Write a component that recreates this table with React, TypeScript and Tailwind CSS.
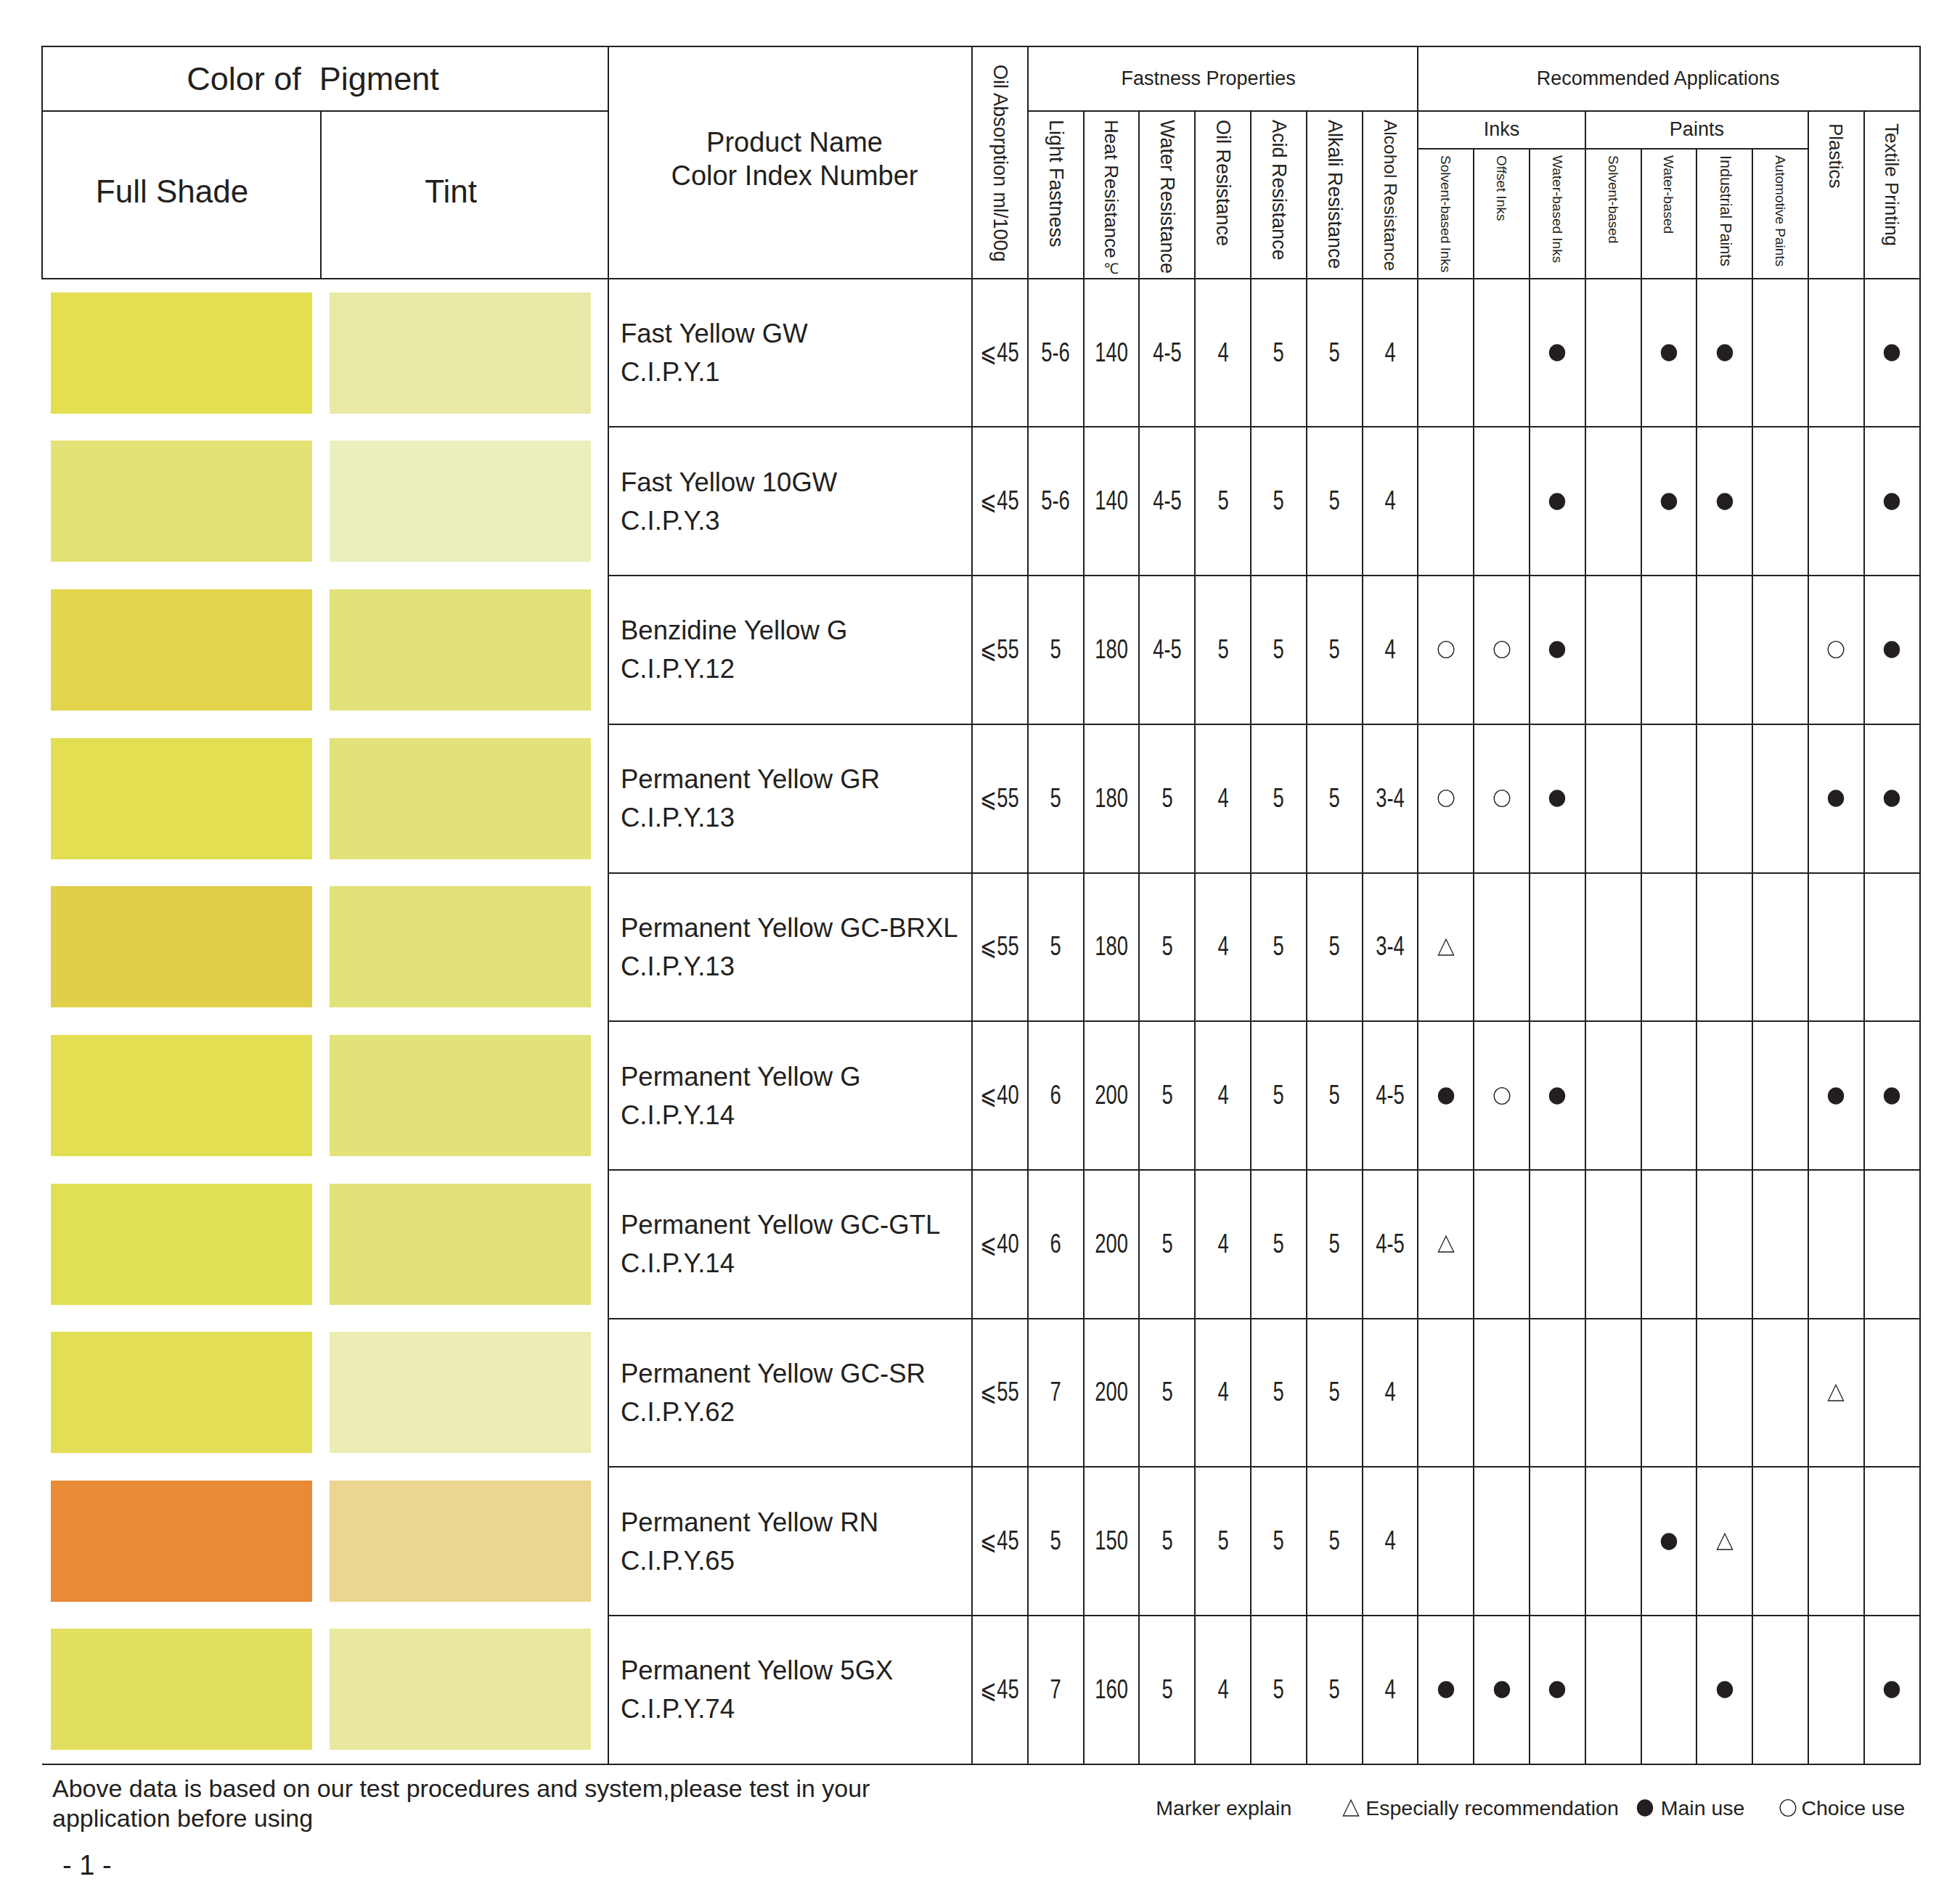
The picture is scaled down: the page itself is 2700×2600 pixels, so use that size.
import React from "react";

const INK = "#231f20";

type Mark = "●" | "○" | "△" | "-";

interface Pigment {
  name: string;
  ci: string;
  full: string;
  tint: string;
  oil: string;
  fast: string[];
  apps: string;
}

// apps: solvent inks, offset inks, water inks, solvent paints, water paints, industrial, automotive, plastics, textile
const pigments: Pigment[] = [
  { name: "Fast Yellow GW", ci: "C.I.P.Y.1", full: "bg-[#e3df50]", tint: "bg-[#e8e9a7]", oil: "⩽45", fast: ["5-6", "140", "4-5", "4", "5", "5", "4"], apps: "--●-●●--●" },
  { name: "Fast Yellow 10GW", ci: "C.I.P.Y.3", full: "bg-[#e2e276]", tint: "bg-[#ebefbc]", oil: "⩽45", fast: ["5-6", "140", "4-5", "5", "5", "5", "4"], apps: "--●-●●--●" },
  { name: "Benzidine Yellow G", ci: "C.I.P.Y.12", full: "bg-[#e4d54f]", tint: "bg-[#e2e27a]", oil: "⩽55", fast: ["5", "180", "4-5", "5", "5", "5", "4"], apps: "○○●----○●" },
  { name: "Permanent Yellow GR", ci: "C.I.P.Y.13", full: "bg-[#e3df52]", tint: "bg-[#e2e27b]", oil: "⩽55", fast: ["5", "180", "5", "4", "5", "5", "3-4"], apps: "○○●----●●" },
  { name: "Permanent Yellow GC-BRXL", ci: "C.I.P.Y.13", full: "bg-[#e1cf4b]", tint: "bg-[#e2e27b]", oil: "⩽55", fast: ["5", "180", "5", "4", "5", "5", "3-4"], apps: "△--------" },
  { name: "Permanent Yellow G", ci: "C.I.P.Y.14", full: "bg-[#e3df52]", tint: "bg-[#e2e27b]", oil: "⩽40", fast: ["6", "200", "5", "4", "5", "5", "4-5"], apps: "●○●----●●" },
  { name: "Permanent Yellow GC-GTL", ci: "C.I.P.Y.14", full: "bg-[#e1e055]", tint: "bg-[#e2e27b]", oil: "⩽40", fast: ["6", "200", "5", "4", "5", "5", "4-5"], apps: "△--------" },
  { name: "Permanent Yellow GC-SR", ci: "C.I.P.Y.62", full: "bg-[#e3df55]", tint: "bg-[#ebedb5]", oil: "⩽55", fast: ["7", "200", "5", "4", "5", "5", "4"], apps: "-------△-" },
  { name: "Permanent Yellow RN", ci: "C.I.P.Y.65", full: "bg-[#e88a36]", tint: "bg-[#ead591]", oil: "⩽45", fast: ["5", "150", "5", "5", "5", "5", "4"], apps: "----●△---" },
  { name: "Permanent Yellow 5GX", ci: "C.I.P.Y.74", full: "bg-[#e2df60]", tint: "bg-[#e9e8a0]", oil: "⩽45", fast: ["7", "160", "5", "4", "5", "5", "4"], apps: "●●●--●--●" },
];

// header label and the font class that matches its printed length
const fastnessHeads: [string, string][] = [
  ["Light Fastness", "[writing-mode:vertical-rl] whitespace-nowrap text-[27px] leading-none"],
  ["Heat Resistance", "[writing-mode:vertical-rl] whitespace-nowrap text-[26px] leading-none"],
  ["Water Resistance", "[writing-mode:vertical-rl] whitespace-nowrap text-[27px] leading-none"],
  ["Oil Resistance", "[writing-mode:vertical-rl] whitespace-nowrap text-[27px] leading-none"],
  ["Acid Resistance", "[writing-mode:vertical-rl] whitespace-nowrap text-[27px] leading-none"],
  ["Alkali Resistance", "[writing-mode:vertical-rl] whitespace-nowrap text-[27px] leading-none"],
  ["Alcohol Resistance", "[writing-mode:vertical-rl] whitespace-nowrap text-[24.5px] leading-none"],
];

const appHeads: [string, string][] = [
  ["Solvent-based Inks", "[writing-mode:vertical-rl] whitespace-nowrap text-[19px] leading-none"],
  ["Offset Inks", "[writing-mode:vertical-rl] whitespace-nowrap text-[19px] leading-none"],
  ["Water-based Inks", "[writing-mode:vertical-rl] whitespace-nowrap text-[19px] leading-none"],
  ["Solvent-based", "[writing-mode:vertical-rl] whitespace-nowrap text-[19px] leading-none"],
  ["Water-based", "[writing-mode:vertical-rl] whitespace-nowrap text-[19px] leading-none"],
  ["Industrial Paints", "[writing-mode:vertical-rl] whitespace-nowrap text-[21.5px] leading-none"],
  ["Automotive Paints", "[writing-mode:vertical-rl] whitespace-nowrap text-[19px] leading-none"],
];

function Marker({ kind }: { kind: Mark }) {
  if (kind === "●")
    return (
      <svg width="24" height="24" viewBox="0 0 24 24">
        <ellipse cx="12" cy="12" rx="11.2" ry="11.8" fill={INK} />
      </svg>
    );
  if (kind === "○")
    return (
      <svg width="24" height="24" viewBox="0 0 24 24">
        <ellipse cx="12" cy="12" rx="10.8" ry="11.3" fill="none" stroke={INK} strokeWidth="1.3" />
      </svg>
    );
  if (kind === "△")
    return (
      <svg width="24" height="24" viewBox="0 0 24 24">
        <path d="M12 1.2 L22.6 23 L1.4 23 Z" fill="none" stroke={INK} strokeWidth="1.3" />
      </svg>
    );
  return null;
}

function VText({ children, className }: { children: React.ReactNode; className: string }) {
  return (
    <div className="flex justify-center">
      <span className={className}>{children}</span>
    </div>
  );
}

export default function App() {
  const cell = "border-2 border-[#231f20]";
  return (
    <div className="w-[2700px] h-[2600px] bg-white text-[#231f20] font-['Liberation_Sans',Arial,sans-serif]">
      <div className="pl-[57px] pt-[63px] w-[2645px]">
        <table className="w-[2588px] table-fixed border-collapse">
          <colgroup>
            <col className="w-[384px]" />
            <col className="w-[396px]" />
            <col className="w-[501px]" />
            {Array.from({ length: 17 }).map((_, i) => (
              <col key={i} className="w-[76.8px]" />
            ))}
          </colgroup>
          <thead>
            <tr className="h-[89px]">
              <th colSpan={2} className={`${cell} p-0 pr-[34px] font-normal text-[45px] leading-none text-center`}>
                {"Color of\u00a0 Pigment"}
              </th>
              <th rowSpan={3} className={`${cell} p-0 pl-[12px] pb-[10px] font-normal text-[38px] leading-[46px] text-center`}>
                Product Name
                <br />
                Color Index Number
              </th>
              <th rowSpan={3} className={`${cell} p-0 pt-[24px] font-normal align-top`}>
                <VText className="[writing-mode:vertical-rl] whitespace-nowrap text-[27px] leading-none">Oil Absorption ml/100g</VText>
              </th>
              <th colSpan={7} className={`${cell} p-0 pr-[40px] font-normal text-[27px] leading-none text-center`}>
                Fastness Properties
              </th>
              <th colSpan={9} className={`${cell} p-0 pr-[30px] font-normal text-[27px] leading-none text-center`}>
                Recommended Applications
              </th>
            </tr>
            <tr className="h-[51px]">
              <th rowSpan={2} className={`${cell} p-0 pr-[26px] pb-[9px] font-normal text-[44px] leading-none text-center`}>
                Full Shade
              </th>
              <th rowSpan={2} className={`${cell} p-0 pr-[38px] pb-[9px] font-normal text-[44px] leading-none text-center`}>
                Tint
              </th>
              {fastnessHeads.map(([h, cls]) => (
                <th key={h} rowSpan={2} className={`${cell} p-0 pt-[11px] font-normal align-top`}>
                  <VText className={cls}>
                    {h}
                    {h === "Heat Resistance" && <span className="text-[20px] ml-[3px]">℃</span>}
                  </VText>
                </th>
              ))}
              <th colSpan={3} className={`${cell} p-0 font-normal text-[27px] leading-none text-center`}>
                Inks
              </th>
              <th colSpan={4} className={`${cell} p-0 font-normal text-[27px] leading-none text-center`}>
                Paints
              </th>
              <th rowSpan={2} className={`${cell} p-0 pt-[16px] font-normal align-top`}>
                <VText className="[writing-mode:vertical-rl] whitespace-nowrap text-[26px] leading-none">Plastics</VText>
              </th>
              <th rowSpan={2} className={`${cell} p-0 pt-[16px] font-normal align-top`}>
                <VText className="[writing-mode:vertical-rl] whitespace-nowrap text-[26px] leading-none">Textile Printing</VText>
              </th>
            </tr>
            <tr className="h-[176px]">
              {appHeads.map(([h, cls]) => (
                <th key={h} className={`${cell} p-0 pt-[8px] font-normal align-top`}>
                  <VText className={cls}>{h}</VText>
                </th>
              ))}
            </tr>
          </thead>
          <tbody>
            {pigments.map((p, r) => {
              const last = r === pigments.length - 1;
              return (
                <tr key={r} className="h-[204.7px]">
                  <td className={last ? "p-0 pl-[12px] border-0 border-b-2 border-[#231f20] align-middle" : "p-0 pl-[12px] border-0 align-middle"}>
                    <div className={`h-[167px] w-[360px] ${p.full}`} />
                  </td>
                  <td className={last ? "p-0 pl-[12px] border-0 border-b-2 border-[#231f20] align-middle" : "p-0 pl-[12px] border-0 align-middle"}>
                    <div className={`h-[167px] w-[360px] ${p.tint}`} />
                  </td>
                  <td className={`${cell} p-0 pl-[16px] align-middle text-[36.5px] leading-[53px] whitespace-nowrap`}>
                    {p.name}
                    <br />
                    {p.ci}
                  </td>
                  {[p.oil, ...p.fast].map((v, i) => (
                    <td key={i} className={`${cell} p-0 text-center align-middle`}>
                      <span className="inline-block scale-x-[0.76] text-[36px] leading-none whitespace-nowrap">{v}</span>
                    </td>
                  ))}
                  {Array.from(p.apps).map((m, i) => (
                    <td key={`a${i}`} className={`${cell} p-0 align-middle`}>
                      <div className="flex justify-center">
                        <Marker kind={m as Mark} />
                      </div>
                    </td>
                  ))}
                </tr>
              );
            })}
          </tbody>
        </table>

        <div className="mt-[12px] flex items-start justify-between">
          <div className="pl-[15px]">
            <p className="text-[34px] leading-[41px]">
              Above data is based on our test procedures and system,please test in your
              <br />
              application before using
            </p>
            <p className="mt-[22px] ml-[14px] text-[38px] leading-[44px] whitespace-pre">- 1 -</p>
          </div>
          <div className="mt-[29px] pr-[21px] flex items-center text-[28.5px] leading-[36px]">
            <span>Marker explain</span>
            <span className="ml-[70px] flex items-center">
              <Marker kind="△" />
            </span>
            <span className="ml-[8px]">Especially recommendation</span>
            <span className="ml-[24px] flex items-center">
              <Marker kind="●" />
            </span>
            <span className="ml-[10px]">Main use</span>
            <span className="ml-[48px] flex items-center">
              <Marker kind="○" />
            </span>
            <span className="ml-[6px]">Choice use</span>
          </div>
        </div>
      </div>
    </div>
  );
}
